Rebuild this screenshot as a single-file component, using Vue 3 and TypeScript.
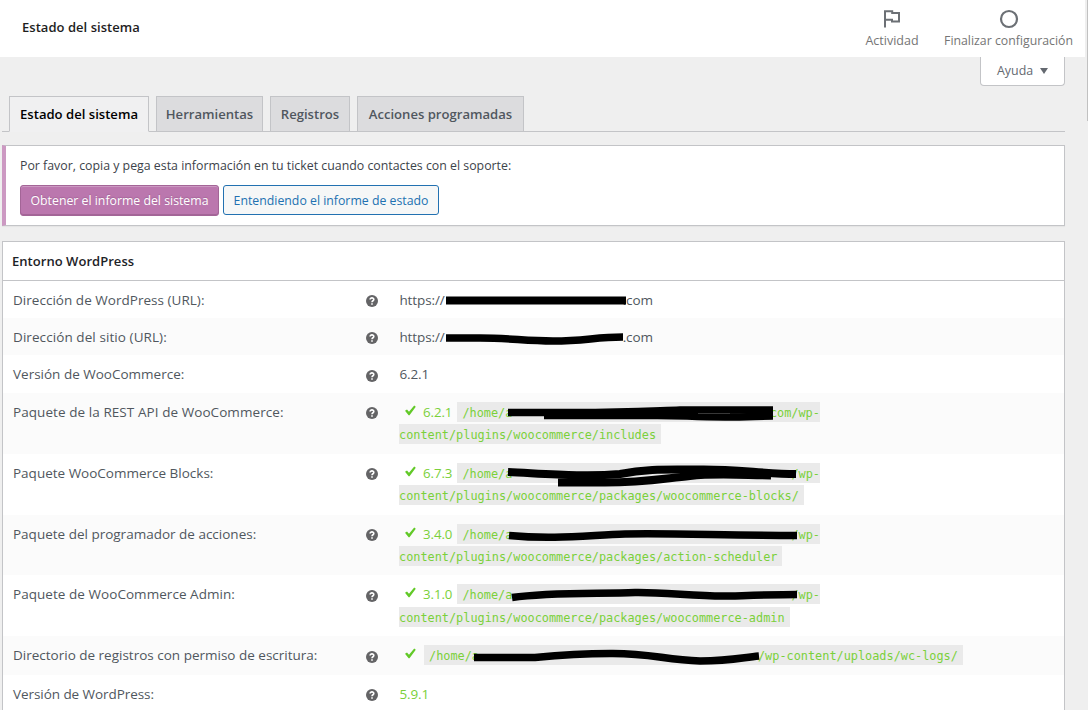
<script setup lang="ts">
interface Row {
  label: string
  size: number
  kind: 'url' | 'plain' | 'package' | 'path' | 'version'
  value?: string
  first?: string
  gap?: number
  tail?: string
  rest?: string
}

const tabs = [
  { name: 'Estado del sistema', cls: 'tab-status' },
  { name: 'Herramientas', cls: 'tab-tools' },
  { name: 'Registros', cls: 'tab-logs' },
  { name: 'Acciones programadas', cls: 'tab-actions' },
]

const rows: Row[] = [
  { label: 'Dirección de WordPress (URL):', size: 37, kind: 'url' },
  { label: 'Dirección del sitio (URL):', size: 37, kind: 'url' },
  { label: 'Versión de WooCommerce:', size: 38, kind: 'plain', value: '6.2.1' },
  { label: 'Paquete de la REST API de WooCommerce:', size: 61, kind: 'package', value: '6.2.1', first: '/home/a', gap: 257.5, tail: 'com/wp-', rest: 'content/plugins/woocommerce/includes' },
  { label: 'Paquete WooCommerce Blocks:', size: 61, kind: 'package', value: '6.7.3', first: '/home/a', gap: 279, tail: '/wp-', rest: 'content/plugins/woocommerce/packages/woocommerce-blocks/' },
  { label: 'Paquete del programador de acciones:', size: 60, kind: 'package', value: '3.4.0', first: '/home/a', gap: 279, tail: '/wp-', rest: 'content/plugins/woocommerce/packages/action-scheduler' },
  { label: 'Paquete de WooCommerce Admin:', size: 61, kind: 'package', value: '3.1.0', first: '/home/a', gap: 279, tail: '/wp-', rest: 'content/plugins/woocommerce/packages/woocommerce-admin' },
  { label: 'Directorio de registros con permiso de escritura:', size: 39, kind: 'path', first: '/home/a', gap: 279, tail: '/wp-content/uploads/wc-logs/' },
  { label: 'Versión de WordPress:', size: 38, kind: 'version', value: '5.9.1' },
]

const strokes = [
  { d: 'M446 300.5H626', w: 8 },
  { d: 'M446 338H480C510 338 525 341 553 341C585 341 595 337 623 337', w: 7.5 },
  { d: 'M508 412.5H560C620 413 650 411 680 410H773', w: 7.5 },
  { d: 'M544 415.5H650C680 415 690 417 725 417C750 417 757 416 773 416', w: 7.5 },
  { d: 'M508 472C550 474 585 477 620 474C650 468 675 470 700 469.5C735 469 765 474 796 474', w: 8 },
  { d: 'M558 482.5H600C640 483 660 479 690 476C715 473 740 475 771 475.5', w: 8 },
  { d: 'M509 535.5C555 540 590 535 625 534C665 533 715 535 797 535.5', w: 7.5 },
  { d: 'M512 597.5C550 592 600 594 635 592.5C665 592 700 597 730 596C765 595 780 594.5 797 594.5', w: 7.5 },
  { d: 'M474 657.5H535C560 655 585 653.5 610 653.5C650 653 665 660 700 661C730 661 740 658 759 656', w: 7.5 },
]
</script>

<template>
  <div class="page">
    <header class="top">
      <h1>Estado del sistema</h1>
      <div class="activity">
        <svg width="18" height="20" viewBox="0 0 18 20"><path d="M2 18.5V2.2H9.2V4H16V12.6H9V10.8H2M9.2 4V5" /></svg>
        <span class="act-text">Actividad</span>
      </div>
      <div class="finish">
        <svg width="20" height="20" viewBox="0 0 20 20"><circle cx="10" cy="10" r="8" /></svg>
        <span class="fin-text">Finalizar configuración</span>
      </div>
    </header>
    <div class="help-line">
      <button class="help"><span>Ayuda</span><i></i></button>
    </div>
    <nav>
      <a v-for="(tab, i) in tabs" :key="tab.name" :class="[tab.cls, { active: i === 0 }]"><span>{{ tab.name }}</span></a>
    </nav>
    <section class="notice">
      <p>Por favor, copia y pega esta información en tu ticket cuando contactes con el soporte:</p>
      <div class="buttons">
        <button class="primary">Obtener el informe del sistema</button>
        <button class="secondary">Entendiendo el informe de estado</button>
      </div>
    </section>
    <section class="report">
      <h2><span>Entorno WordPress</span></h2>
      <div v-for="(row, i) in rows" :key="row.label" class="row" :class="[row.kind, `row-${i}`]" :style="{ height: `${row.size}px` }">
        <div class="label"><span>{{ row.label }}</span></div>
        <svg class="tip" width="12" height="12" viewBox="0 0 12 12">
          <circle cx="6" cy="6" r="6" />
          <path d="M4.1 4.6C4.1 2.3 7.9 2.4 7.8 4.5C7.8 5.8 6 5.7 6 7.2M6 8.2V9.7" />
        </svg>
        <div class="value">
          <template v-if="row.kind === 'url'"><span>https://</span><span class="url-gap"></span><span>.com</span></template>
          <span v-else-if="row.kind === 'plain' || row.kind === 'version'">{{ row.value }}</span>
          <template v-else>
            <div class="line">
              <svg class="check" width="11" height="11" viewBox="0 0 11 11"><path d="M0 5.8L2 4.5L4 6.8L9.2 0.5L10.8 1.7L4.5 10.2H3.6Z" /></svg>
              <span v-if="row.value" class="number">{{ row.value }}</span>
              <code>{{ row.first }}<i :style="{ width: `${row.gap}px` }"></i>{{ row.tail }}</code>
            </div>
            <div v-if="row.rest" class="line"><code class="continued">{{ row.rest }}</code></div>
          </template>
        </div>
      </div>
    </section>
    <svg class="marks" width="1088" height="710" viewBox="0 0 1088 710">
      <path v-for="stroke in strokes" :key="stroke.d" :d="stroke.d" :stroke-width="stroke.w" />
      <path class="slit" d="M698 413.5H730" />
    </svg>
    <div class="thumb"></div>
  </div>
</template>

<style>
body { margin: 0; overflow: hidden; }
</style>

<style scoped>
* { box-sizing: border-box; }
.page { position: relative; width: 1088px; height: 710px; overflow: hidden; background: #efefef; color: #50575e; font: 13px/20px "Open Sans", "Noto Sans", sans-serif; white-space: nowrap; }
h1, h2, p { margin: 0; }
button { font: inherit; margin: 0; white-space: nowrap; }
.top { width: 1085px; height: 57px; background: #fff; display: flex; align-items: flex-start; }
h1 { color: #1e1e1e; font-size: 13px; letter-spacing: .04px; line-height: 20px; font-weight: 600; margin: 17px auto 0 22px; }
.activity, .finish { display: flex; flex-direction: column; align-items: center; color: #757575; font-size: 12.5px; padding-top: 9px; }
.activity { width: 60px; margin-right: 18px; }
.finish { width: 137px; margin-right: 8px; font-size: 12.3px; }
.activity svg, .finish svg { fill: none; stroke: #6c7075; stroke-width: 2; }
.finish svg { stroke-width: 2.2; }
.activity span, .finish span { line-height: 20px; margin-top: 2px; }
.help-line { display: flex; justify-content: flex-end; width: 1065px; height: 39px; }
.help { width: 85px; height: 29px; border: 1px solid #c3c4c7; border-top: 0; border-radius: 0 0 4px 4px; background: #fff; color: #646970; display: flex; align-items: center; padding: 0 0 0 16px; font-size: 12.4px; }
.help i { border: 4.5px solid transparent; border-top: 6px solid #646970; border-bottom: 0; margin-left: 7px; }
nav { margin-left: 2px; width: 1063px; height: 36px; padding-left: 7px; display: flex; gap: 7px; border-bottom: 1px solid #c3c4c7; }
nav a { height: 36px; background: #dcdcde; border: 1px solid #c3c4c7; color: #50575e; font-size: 13.1px; font-weight: 600; line-height: 35px; text-align: center; display: flex; justify-content: center; }
nav a.active { background: #f0f0f1; border-bottom-color: #f0f0f1; color: #000; }
.tab-status { width: 140px; }
.tab-tools { width: 107px; }
.tab-logs { width: 80px; }
.tab-actions { width: 167px; }
.notice { margin: 13px 0 0 2px; width: 1063px; height: 81px; border: 1px solid #c3c4c7; border-left: 4px solid #cc99c2; background: #fff; padding: 10px 14px; color: #3c434a; box-shadow: 0 1px 1px rgba(0,0,0,.04); }
.notice p { font-size: 12.35px; }
.buttons { display: flex; gap: 4px; padding-top: 9px; align-items: flex-start; font-size: 12.3px; }
.primary, .secondary { height: 31px; border-radius: 3px; padding: 0; text-align: center; }
.primary { width: 199px; padding-top: 1px; color: #fff; background: #bb77ae; border: 1px solid #a36597; box-shadow: inset 0 1px 0 rgba(255,255,255,.25), inset 0 -1px 0 #a36597; text-shadow: 0 -1px 1px #a36597; }
.secondary { width: 216px; height: 30px; padding-top: 2px; color: #2271b1; background: #f6f7f7; border: 1px solid #2271b1; }
.report { margin: 15px 0 0 2px; width: 1063px; height: 480px; border: 1px solid #c3c4c7; background: #fff; }
h2 { height: 39px; border-bottom: 1px solid #c3c4c7; padding: 9px 9px; color: #1d2327; font-size: 13px; letter-spacing: .04px; font-weight: 600; line-height: 20px; }
.row { display: flex; padding: 9px 0 0 10px; font-size: 13.5px; background: #fff; }
.row:nth-child(odd) { background: #fbfbfb; }
.label { width: 353px; }
.row-0 .label { letter-spacing: .03px; }
.row-1 .label { letter-spacing: .08px; }
.row-3 .label { letter-spacing: .07px; }
.row-6 .label { letter-spacing: .05px; }
.row-8 .label { letter-spacing: -.06px; }
.tip { margin-top: 5px; flex: none; fill: #646466; }
.row-2 .tip, .row-6 .tip, .row-7 .tip { margin-top: 6px; }
.tip path { fill: none; stroke: #fff; stroke-width: 1.6; }
.value { margin-left: 21.4px; display: flex; color: #50575e; letter-spacing: -.1px; }
.package .value, .path .value { flex-direction: column; margin-left: 21px; color: #7ad03a; }
.version .value { color: #7ad03a; }
.url-gap { width: 178px; }
.line { display: flex; align-items: center; height: 20px; margin-bottom: 2px; }
.row-6 .line { margin-bottom: 3px; }
.check { fill: #62c928; margin: -3px 7px 0 6px; }
.number { width: 34.4px; font-size: 13.3px; }
code { display: flex; height: 20px; line-height: 22px; letter-spacing: 0; font-family: "DejaVu Sans Mono", monospace; font-size: 11.875px; background: #eaeaea; padding: 0 0 0 5px; }
.path code { margin-left: 1px; padding-right: 5px; }
.continued { padding: 0 5px 0 0; }
code i { display: block; }
.marks { position: absolute; inset: 0; pointer-events: none; fill: none; stroke: #000; }
.marks .slit { stroke: #444; stroke-width: .8; }
.thumb { position: absolute; top: 0; right: 0; width: 1px; height: 121px; background: #c1c1c1; }
</style>
